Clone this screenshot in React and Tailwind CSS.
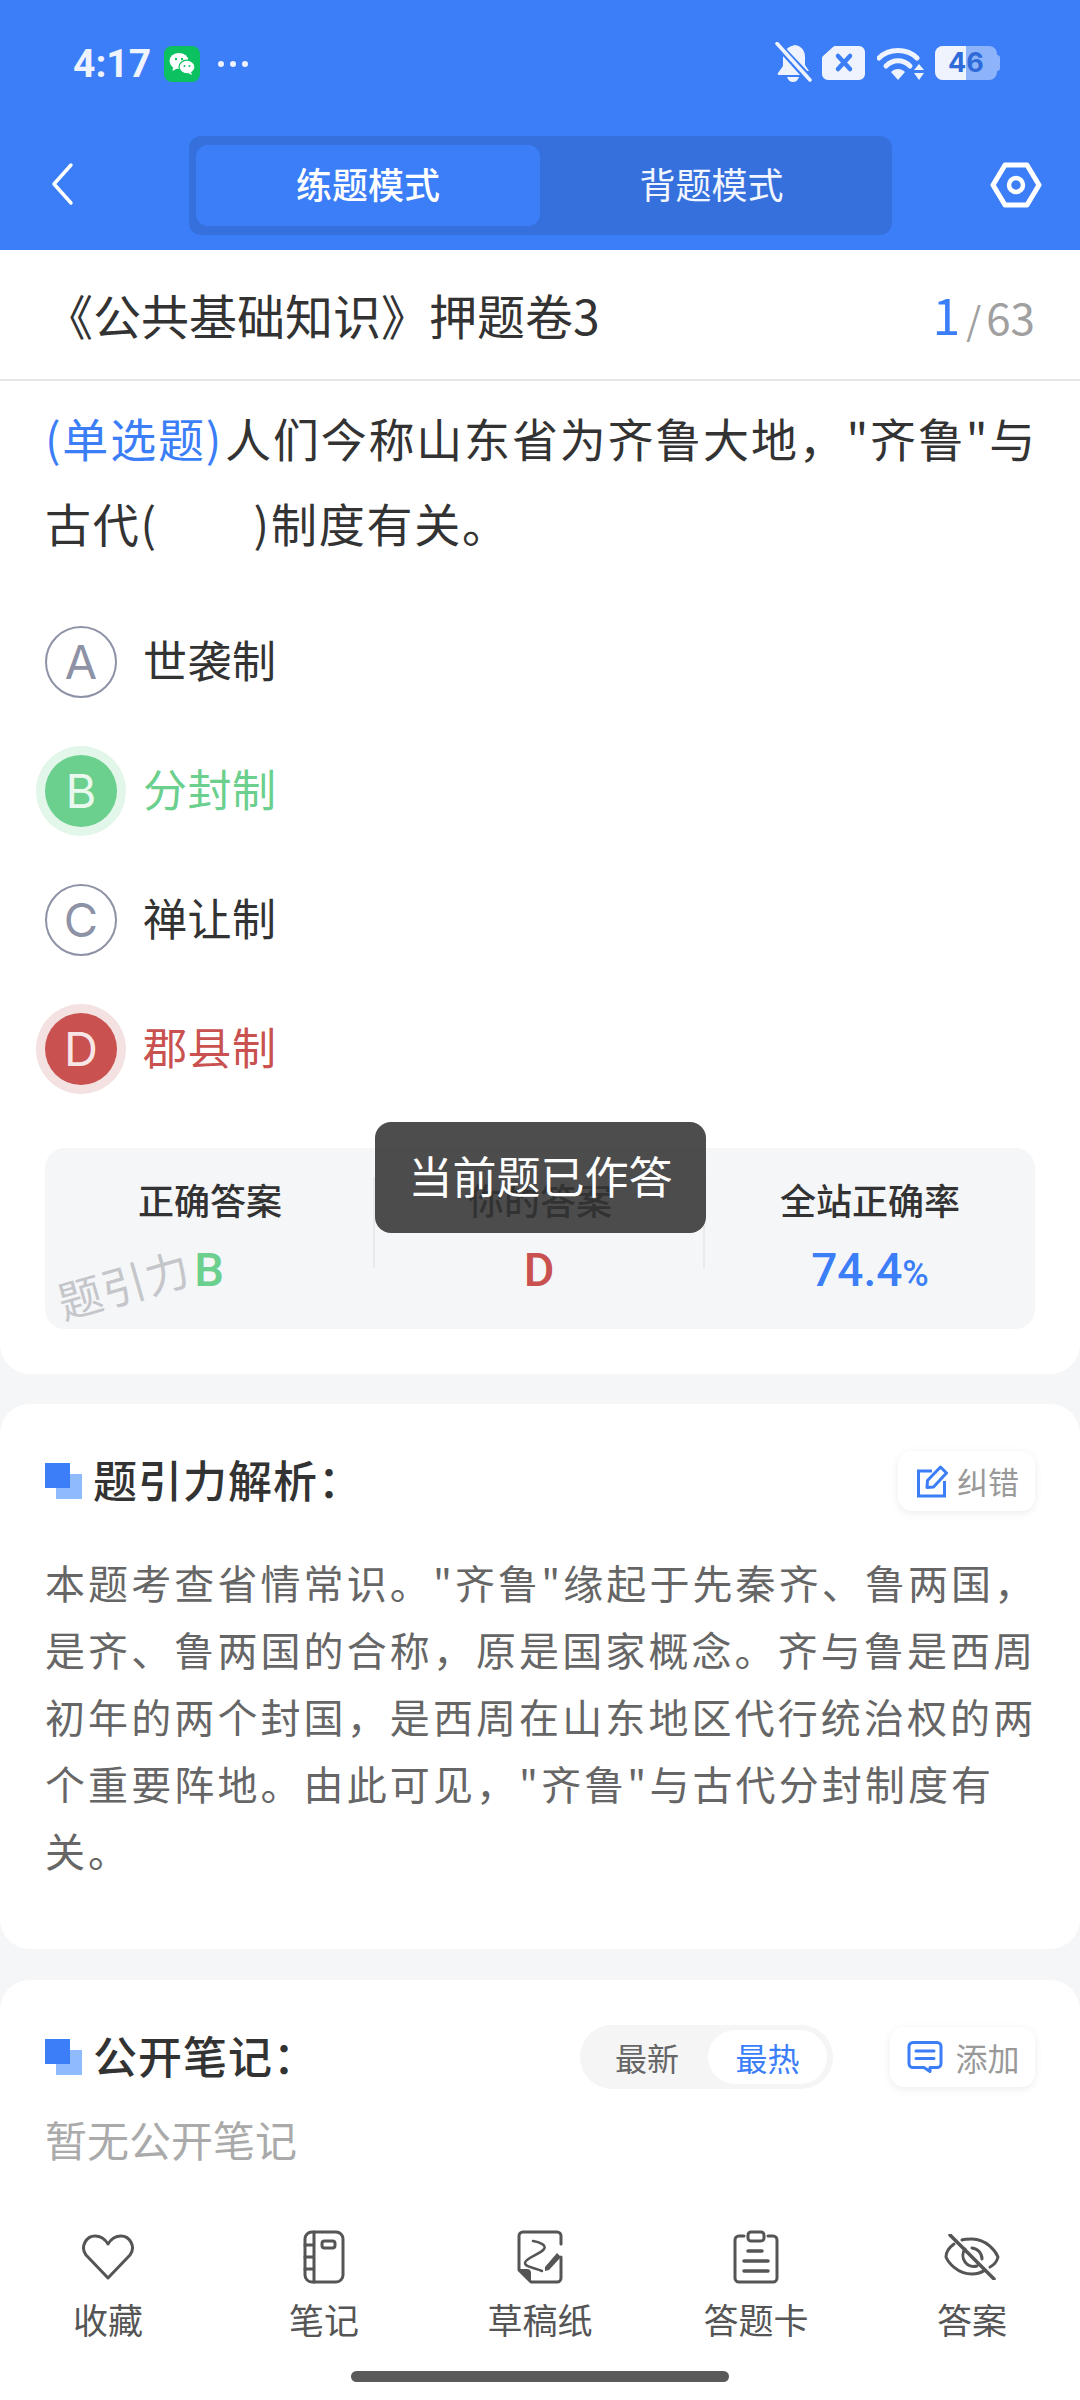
const cjk = { fontFamily: '"Noto Sans CJK SC", "Noto Sans", sans-serif' };

function Options() {
  const rows = [
    { l: 'A', t: '世袭制', kind: 'plain' },
    { l: 'B', t: '分封制', kind: 'ok' },
    { l: 'C', t: '禅让制', kind: 'plain' },
    { l: 'D', t: '郡县制', kind: 'bad' },
  ];
  return (
    <div className="flex flex-col gap-[57px] mt-[61px]">
      {rows.map((r) => (
        <div key={r.l} className="flex items-center h-[72px]">
          {r.kind === 'plain' && (
            <div className="w-[72px] h-[72px] rounded-full border-2 border-[#8e92a6] flex items-center justify-center text-[#8e92a6] text-[47px]" style={{ fontFamily: 'Inter, sans-serif', fontWeight: 400 }}>{r.l}</div>
          )}
          {r.kind === 'ok' && (
            <div className="w-[72px] h-[72px] rounded-full bg-[#6bcf8d] ring-[9px] ring-[#e3f6ea] flex items-center justify-center text-[#e9f9ee] text-[47px]" style={{ fontFamily: 'Inter, sans-serif', fontWeight: 400 }}>{r.l}</div>
          )}
          {r.kind === 'bad' && (
            <div className="w-[72px] h-[72px] rounded-full bg-[#c9514f] ring-[9px] ring-[#f4e1e1] flex items-center justify-center text-[#f8e6e6] text-[47px]" style={{ fontFamily: 'Inter, sans-serif', fontWeight: 400 }}>{r.l}</div>
          )}
          <span className={`ml-[26px] pb-[6px] text-[44px] leading-[72px] tracking-[0.5px] ${r.kind === 'ok' ? 'text-[#6bcf8d]' : r.kind === 'bad' ? 'text-[#c9514f]' : 'text-[#333333]'}`}>{r.t}</span>
        </div>
      ))}
    </div>
  );
}

function Heading({ children }) {
  return (
    <div className="flex items-center">
      <div className="relative w-[37px] h-[36px] shrink-0">
        <div className="absolute left-[11px] top-[11px] w-[26px] h-[25px] bg-[#8fbafc]" />
        <div className="absolute left-0 top-0 w-[25px] h-[25px] bg-[#3b7ef8]" />
      </div>
      <span className="ml-[11px] pb-[4px] text-[44px] leading-[60px] font-medium tracking-[1px] text-[#333333]">{children}</span>
    </div>
  );
}

function NavItem({ icon, label }) {
  return (
    <div className="flex-1 flex flex-col items-center">
      <div className="h-[54px] flex items-center justify-center">{icon}</div>
      <div className="mt-[10px] text-[35px] leading-[50px] text-[#555555]">{label}</div>
    </div>
  );
}

const navStroke = { fill: 'none', stroke: '#555555', strokeWidth: 3, strokeLinecap: 'round', strokeLinejoin: 'round' };

export default function App() {
  return (
    <div className="w-[1080px] h-[2400px] overflow-hidden flex flex-col bg-[#f5f6f8]" style={cjk}>
      {/* header */}
      <div className="h-[250px] shrink-0 bg-[#3b7ef8]">
        <div className="h-[136px] relative">
          <div className="flex items-center pl-[73px] pt-[46px] h-[82px]">
            <span className="text-[39px] font-bold leading-[40px] text-[#eef3fe] w-[91px]" style={{ fontFamily: 'Roboto, sans-serif' }}>4:17</span>
            <div className="w-[36px] h-[36px] rounded-[8px] bg-[#0bc160] flex items-center justify-center">
              <svg width="28" height="26" viewBox="0 0 28 26">
                <ellipse cx="11" cy="10" rx="9.500" ry="8" fill="#fff" />
                <path d="M5 16 L4.500 20 L9 17.500Z" fill="#fff" />
                <ellipse cx="19" cy="16" rx="8" ry="6.800" fill="#fff" stroke="#0bc160" strokeWidth="1.200" />
                <path d="M23 21 L24 24 L20 22Z" fill="#fff" />
                <circle cx="8" cy="8" r="1.200" fill="#0bc160" />
                <circle cx="14" cy="8" r="1.200" fill="#0bc160" />
                <circle cx="16.500" cy="15" r="1" fill="#0bc160" />
                <circle cx="21.500" cy="15" r="1" fill="#0bc160" />
              </svg>
            </div>
            <div className="ml-[18px] flex gap-[6px]">
              <span className="w-[6px] h-[6px] rounded-full bg-[#eef3fe]" />
              <span className="w-[6px] h-[6px] rounded-full bg-[#eef3fe]" />
              <span className="w-[6px] h-[6px] rounded-full bg-[#eef3fe]" />
            </div>
          </div>
          <div className="absolute left-[775px] top-[42px] flex items-start">
            <svg width="37" height="41" viewBox="0 0 37 41">
              <path d="M20 3c6 1 10 5 10 12v8l4 6H26L10 9c2-3 5-5 10-6Z" fill="#eef3fe" />
              <path d="M8 14v10l-5 7c-1 1 0 2 1 2h21L8 14Z" fill="#eef3fe" />
              <path d="M12 35h12c-1 3-3 5-6 5s-5-2-6-5Z" fill="#eef3fe" />
              <path d="M2 2 L35 37" stroke="#3b7ef8" strokeWidth="7" />
              <path d="M2 1.500 L35 38" stroke="#eef3fe" strokeWidth="3.600" strokeLinecap="round" />
            </svg>
            <svg className="ml-[10px] mt-[4px]" width="43" height="34" viewBox="0 0 43 34">
              <path d="M14 0H37a6 6 0 0 1 6 6V28a6 6 0 0 1-6 6H6a6 6 0 0 1-6-6V13a4 4 0 0 1 1-3L11 1a4 4 0 0 1 3-1Z" fill="#eef3fe" />
              <path d="M16 10 L28 23 M28 10 L16 23" stroke="#3b7ef8" strokeWidth="4.500" strokeLinecap="round" />
            </svg>
            <svg className="ml-[12px] mt-[5px]" width="48" height="34" viewBox="0 0 48 34">
              <path d="M2 11C12 1 30 1 40 11" fill="none" stroke="#eef3fe" strokeWidth="5" strokeLinecap="round" />
              <path d="M9 19C16 12 26 12 33 19" fill="none" stroke="#eef3fe" strokeWidth="5" strokeLinecap="round" />
              <path d="M14 25c4-4 10-4 14 0l-7 8Z" fill="#eef3fe" />
              <path d="M42 17l5 6H37Z M42 33l5-7H37Z" fill="#eef3fe" />
            </svg>
            <div className="relative ml-[10px] mt-[4px] w-[65px] h-[34px]">
              <div className="absolute right-0 top-[9px] w-[4px] h-[16px] rounded-r-[3px] bg-[#8db4fb]" />
              <div className="absolute left-0 top-0 w-[62px] h-[34px] rounded-[8px] bg-[#8db4fb] overflow-hidden">
                <div className="w-[31px] h-full bg-[#eef3fe]" />
              </div>
              <div className="absolute left-0 top-0 w-[62px] h-[34px] flex items-center justify-center text-[27px] font-bold text-[#2f6bd8]" style={{ fontFamily: 'Inter, sans-serif' }}>46</div>
            </div>
          </div>
        </div>
        <div className="flex items-center h-[99px] relative">
          <svg className="absolute left-[50px] top-[26px]" width="24" height="44" viewBox="0 0 24 44">
            <path d="M21 3 L4 22 L21 41" fill="none" stroke="#fff" strokeWidth="3.500" strokeLinecap="round" strokeLinejoin="round" />
          </svg>
          <div className="ml-[189px] w-[703px] h-[99px] rounded-[12px] bg-[#3570dd] flex pl-[7px] pt-[9px] pb-[9px]">
            <div className="w-[344px] rounded-[12px] bg-[#3b7ef8] flex items-center justify-center pb-[5px] text-white text-[36px] font-medium">练题模式</div>
            <div className="flex-1 flex items-center justify-center pb-[5px] text-[#f2f6ff] text-[36px] pr-[9px]">背题模式</div>
          </div>
          <svg className="absolute left-[990px] top-[25px]" width="52" height="48" viewBox="0 0 52 48">
            <path d="M15 4H37L49 24L37 44H15L3 24Z" fill="none" stroke="#fff" strokeWidth="5" strokeLinejoin="round" />
            <circle cx="26" cy="24" r="7" fill="none" stroke="#fff" strokeWidth="4.500" />
          </svg>
        </div>
      </div>

      {/* scroll area */}
      <div className="flex-1 min-h-0 overflow-hidden flex flex-col">
        <div className="bg-white rounded-b-[30px] h-[1124px] shrink-0 relative">
          <div className="h-[131px] border-b-2 border-[#e6e6e6] flex items-center justify-between pl-[45px] pr-[45px]">
            <span className="pb-[2px] text-[48px] text-[#333333]">《公共基础知识》押题卷3</span>
            <span className="flex items-baseline pb-[2px] text-[#a0a0a0] text-[44px]">
              <span className="text-[50px] text-[#3b7ef8] mr-[1px]">1</span>
              <span className="text-[38px] mx-[5px]">/</span>
              <span>63</span>
            </span>
          </div>
          <div className="px-[45px] pt-[14px]">
            <div className="text-[46px] leading-[85px] tracking-[1.8px] text-[#333333] whitespace-nowrap">
              <div><span className="text-[#3b7ef8] mr-[2px]">(单选题)</span>人们今称山东省为齐鲁大地，"齐鲁"与</div>
              <div>古代(　　)制度有关。</div>
            </div>
            <Options />
            <div className="mt-[63px] h-[181px] rounded-[20px] bg-[#f5f6f8] relative flex pt-[29px]">
              {[['正确答案', 'B', 'text-[#6bcf8d]'], ['你的答案', 'D', 'text-[#c9514f]']].map(([a, b, c]) => (
                <div key={a} className="w-[330px] flex flex-col items-center h-[91px] border-r-2 border-[#eaeaea]">
                  <div className="pl-[2px] text-[36px] leading-[44px] font-medium text-[#333333]">{a}</div>
                  <div className={`mt-[24px] text-[47px] leading-[50px] font-medium ${c}`} style={{ fontFamily: 'Roboto, sans-serif' }}>{b}</div>
                </div>
              ))}
              <div className="flex-1 flex flex-col items-center h-[91px]">
                <div className="text-[36px] leading-[44px] font-medium text-[#333333]">全站正确率</div>
                <div className="mt-[24px] leading-[50px] font-medium text-[#3b7ef8] text-[46px]" style={{ fontFamily: 'Roboto, sans-serif' }}>74.4<span className="text-[36px]">%</span></div>
              </div>
              <div className="absolute left-[11px] top-[110px] text-[44px] leading-[50px] text-[#c4c6ca] -rotate-[16deg] tracking-[1px]">题引力</div>
            </div>
          </div>
          <div className="absolute left-[375px] top-[872px] w-[331px] h-[111px] rounded-[16px] bg-[#333333]/87 flex items-center justify-center text-white text-[44px] pb-[6px]">当前题已作答</div>
        </div>

        <div className="mt-[30px] bg-white rounded-[30px] h-[545px] shrink-0 px-[45px] pt-[45px]">
          <div className="flex items-center justify-between">
            <Heading>题引力解析：</Heading>
            <div className="w-[137px] h-[60px] rounded-[14px] bg-white shadow-[0_2px_8px_rgba(0,0,0,0.08)] flex items-center justify-center gap-[9px] pl-[3px]">
              <svg width="31" height="33" viewBox="0 0 31 33">
                <path d="M15 6H1.500V31H27.500V16" fill="none" stroke="#3b7ef8" strokeWidth="3" />
                <path d="M10 22.500 L10.500 15.500 L23.500 2 L29.500 8 L16.500 22Z" fill="none" stroke="#3b7ef8" strokeWidth="3" strokeLinejoin="round" />
              </svg>
              <span className="text-[31px] text-[#999999]">纠错</span>
            </div>
          </div>
          <div className="mt-[36px] text-[40px] leading-[67px] text-[#666666] tracking-[3.1px] whitespace-nowrap">
            <div>本题考查省情常识。"齐鲁"缘起于先秦齐、鲁两国，</div>
            <div>是齐、鲁两国的合称，原是国家概念。齐与鲁是西周</div>
            <div>初年的两个封国，是西周在山东地区代行统治权的两</div>
            <div>个重要阵地。由此可见，"齐鲁"与古代分封制度有</div>
            <div>关。</div>
          </div>
        </div>

        <div className="mt-[31px] bg-white rounded-t-[30px] flex-1 px-[45px] pt-[45px]">
          <div className="flex items-center">
            <Heading>公开笔记：</Heading>
            <div className="ml-auto w-[253px] h-[64px] rounded-full bg-[#f5f5f5] flex items-center p-[6px]">
              <div className="flex-1 text-center text-[32px] text-[#666666]">最新</div>
              <div className="w-[119px] h-[54px] rounded-full bg-white flex items-center justify-center text-[32px] text-[#3b7ef8]">最热</div>
            </div>
            <div className="ml-[57px] w-[145px] h-[60px] rounded-[14px] bg-white shadow-[0_2px_8px_rgba(0,0,0,0.08)] flex items-center justify-center gap-[12px] pl-[2px]">
              <svg width="36" height="32" viewBox="0 0 36 32">
                <path d="M23 26.500H30a4 4 0 0 0 4-4V5.500a4 4 0 0 0-4-4H6a4 4 0 0 0-4 4V22.500a4 4 0 0 0 4 4H17L23 30.500V26.500" fill="none" stroke="#3b7ef8" strokeWidth="3" strokeLinejoin="round" strokeLinecap="round" />
                <path d="M9 10H27 M9 17.500H27" stroke="#3b7ef8" strokeWidth="3" strokeLinecap="round" />
              </svg>
              <span className="text-[32px] text-[#999999]">添加</span>
            </div>
          </div>
          <div className="mt-[20px] text-[42px] leading-[60px] text-[#aaaaaa]">暂无公开笔记</div>
        </div>
      </div>

      {/* bottom nav */}
      <div className="-mt-[200px] relative h-[200px] shrink-0 bg-white flex flex-col pt-[30px]">
        <div className="flex">
          <NavItem label="收藏" icon={
            <svg width="54" height="48" viewBox="0 0 54 48"><path d="M27 45L5 22C-1 14 5 3 14 3C20 3 24 6 27 11C30 6 34 3 40 3C49 3 55 14 49 22Z" {...navStroke} /></svg>
          } />
          <NavItem label="笔记" icon={
            <svg width="42" height="54" viewBox="0 0 42 54"><rect x="2" y="2" width="38" height="50" rx="7" {...navStroke} /><path d="M11 2V52 M2 15H11 M2 27H11 M2 39H11" {...navStroke} /><rect x="19" y="11" width="13" height="7" rx="2.500" {...navStroke} /></svg>
          } />
          <NavItem label="草稿纸" icon={
            <svg width="46" height="54" viewBox="0 0 46 54">
              <path d="M44 14V6a4 4 0 0 0-4-4H6a4 4 0 0 0-4 4V40L14 52H40a4 4 0 0 0 4-4V27" {...navStroke} />
              <path d="M2 40H10a3 3 0 0 1 3 3V51Z" fill="#555555" stroke="#555555" strokeWidth="2" strokeLinejoin="round" />
              <path d="M16 11C22 12 30 15 27 19C24 24 8 28 8 33C8 37 18 38 25 41" {...navStroke} strokeWidth="2.500" />
              <path d="M28 37L40 23L44 27L32 40L28 41Z" fill="#555555" />
            </svg>
          } />
          <NavItem label="答题卡" icon={
            <svg width="46" height="54" viewBox="0 0 46 54"><path d="M11 6H6a4 4 0 0 0-4 4V48a4 4 0 0 0 4 4H40a4 4 0 0 0 4-4V10a4 4 0 0 0-4-4H35" {...navStroke} /><rect x="15" y="2" width="16" height="9" rx="3" {...navStroke} /><path d="M15 21H29 M11 31H35 M11 41H35" {...navStroke} strokeWidth="3.500" /></svg>
          } />
          <NavItem label="答案" icon={
            <svg width="56" height="46" viewBox="0 0 56 46"><path d="M10 10C3 15 2 21 2 23C4 28 13 40 28 40C33 40 37 39 41 36 M18 6C21 5 24 5 28 5C43 5 52 18 54 23C53 27 50 31 46 33" {...navStroke} /><path d="M6 1L50 45" {...navStroke} strokeWidth="3.500" /><path d="M21 15A11 11 0 0 0 33 32" {...navStroke} /><path d="M28 14A11 11 0 0 1 38 25" {...navStroke} /></svg>
          } />
        </div>
        <div className="mt-[27px] self-center w-[378px] h-[11px] rounded-full bg-[#5a5a5a]" />
      </div>
    </div>
  );
}
